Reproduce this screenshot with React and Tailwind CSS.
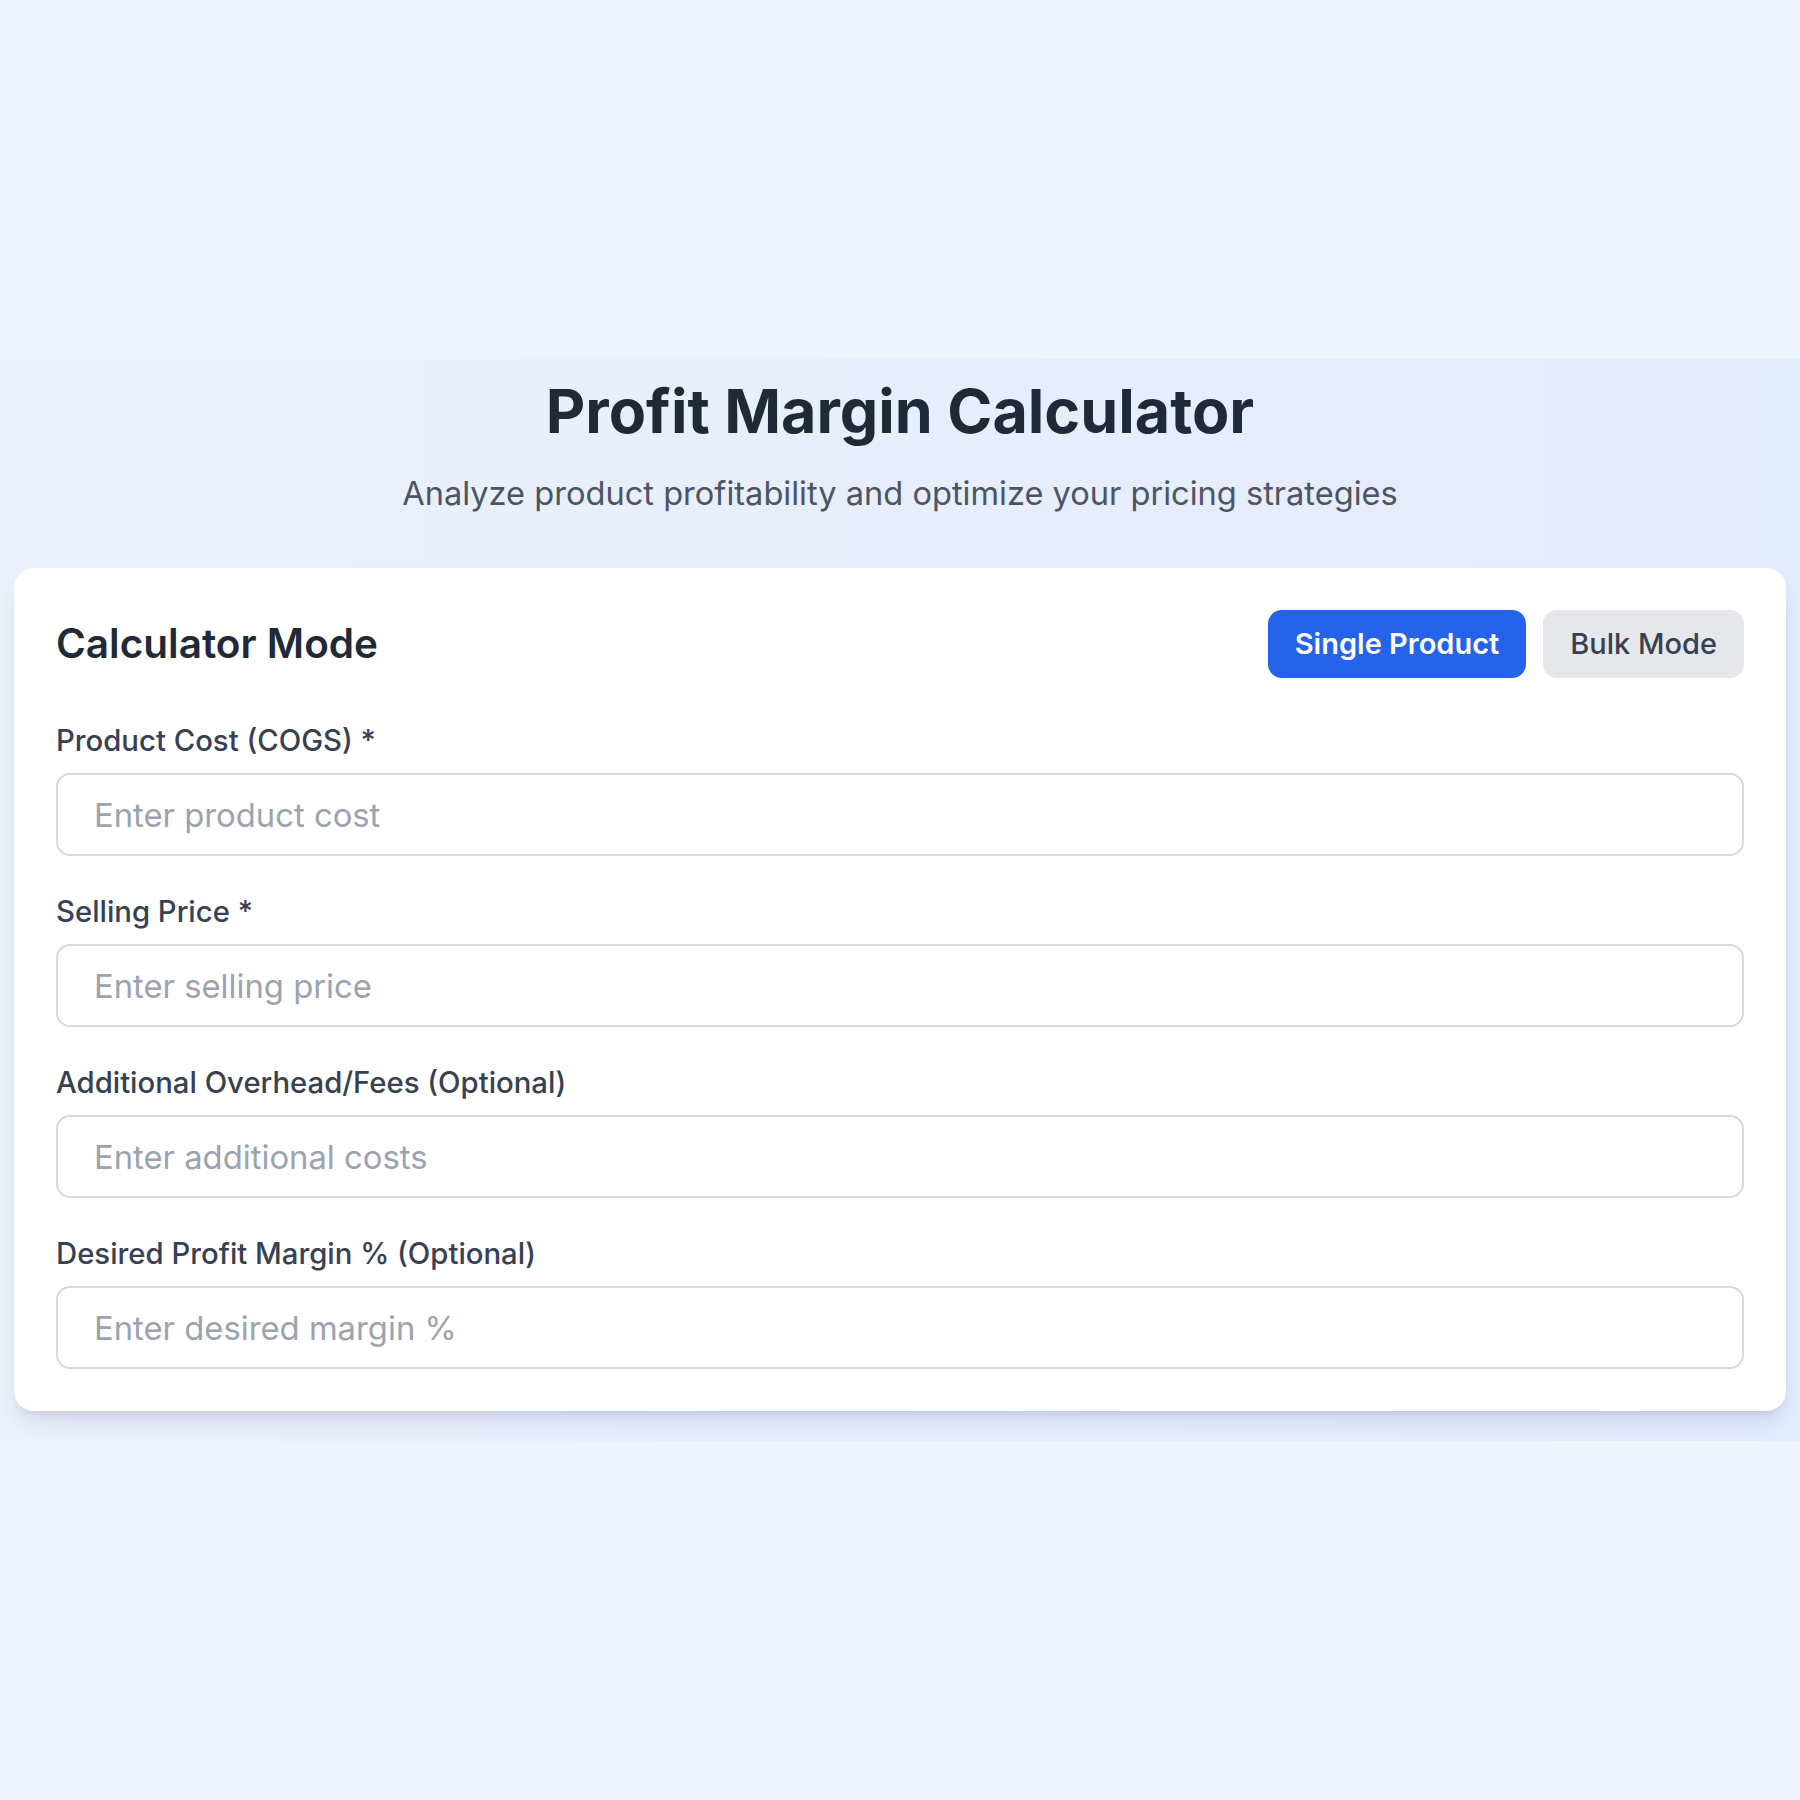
import React, { useState } from 'react';

const fields = [
  { label: 'Product Cost (COGS) *', placeholder: 'Enter product cost' },
  { label: 'Selling Price *', placeholder: 'Enter selling price' },
  { label: 'Additional Overhead/Fees (Optional)', placeholder: 'Enter additional costs' },
  { label: 'Desired Profit Margin % (Optional)', placeholder: 'Enter desired margin %' },
];

const ProfitCalculator = () => {
  const [mode, setMode] = useState('single');
  const [values, setValues] = useState({});

  return (
    <div className="min-h-[1800px] bg-[#eef3fe] font-['Inter',sans-serif]">
      <div className="h-[359px]" />

      {/* Calculator section */}
      <div className="h-[1082px] bg-gradient-to-r from-[#ecf1fd] to-[#e4ebfd] px-[14px] pt-[17px]">
        <div className="text-center">
          <h1 className="text-[61px] leading-[70px] font-bold text-[#1f2937]">Profit Margin Calculator</h1>
          <p className="mt-[23px] text-[32.6px] leading-[49px] text-[#4b5563]">
            Analyze product profitability and optimize your pricing strategies
          </p>
        </div>

        <div className="mt-[50px] bg-white rounded-[20px] p-[42px] shadow-[0_14px_24px_-6px_rgba(30,41,99,0.14),0_6px_10px_-6px_rgba(30,41,99,0.12)]">
          {/* Header */}
          <div className="flex items-center justify-between h-[68px]">
            <h2 className="text-[40.5px] leading-[58px] font-semibold text-[#1f2937]">Calculator Mode</h2>
            <div className="flex gap-[17px]">
              <button
                onClick={() => setMode('single')}
                className={mode === 'single'
                  ? 'h-[68px] px-[27px] rounded-[14px] bg-[#2563eb] text-white text-[29px] font-semibold'
                  : 'h-[68px] px-[27px] rounded-[14px] bg-[#e5e7eb] text-[#374151] text-[29px] font-medium'}
              >
                Single Product
              </button>
              <button
                onClick={() => setMode('bulk')}
                className={mode === 'bulk'
                  ? 'h-[68px] px-[27px] rounded-[14px] bg-[#2563eb] text-white text-[29px] font-semibold'
                  : 'h-[68px] px-[27px] rounded-[14px] bg-[#e5e7eb] text-[#374151] text-[29px] font-medium'}
              >
                Bulk Mode
              </button>
            </div>
          </div>

          {/* Fields */}
          <div className="mt-[42px] flex flex-col gap-[35px]">
            {fields.map((f, i) => (
              <div key={i}>
                <label className="block text-[29.3px] leading-[42px] font-medium text-[#374151]">{f.label}</label>
                <input
                  type="number"
                  placeholder={f.placeholder}
                  value={values[i] || ''}
                  onChange={(e) => setValues({ ...values, [i]: e.target.value })}
                  className="mt-[11px] block w-full h-[83px] px-[36px] border-2 border-[#d6d9de] rounded-[14px] text-[32.8px] text-[#1f2937] placeholder:text-[#9ca3af] outline-none"
                />
              </div>
            ))}
          </div>
        </div>
      </div>
    </div>
  );
};

export default ProfitCalculator;
